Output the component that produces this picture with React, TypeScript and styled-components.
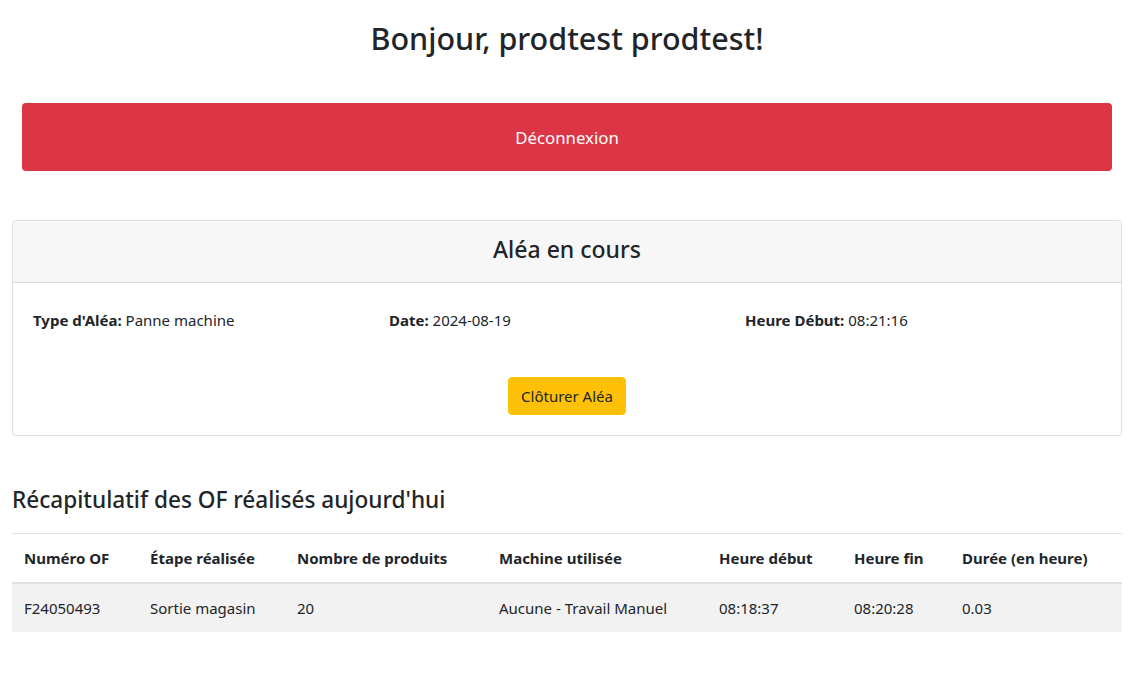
import React from "react";
import styled, { createGlobalStyle } from "styled-components";

const GlobalStyle = createGlobalStyle`
  html, body {
    margin: 0;
    padding: 0;
    background: #fff;
  }
  body {
    font-family: "Noto Sans", "Open Sans", Arial, sans-serif;
    font-size: 16px;
    line-height: 1.5;
    color: #212529;
  }
`

const Page = styled.div`
  display: flex;
  flex-direction: column;
  padding: 0 19px 0 12px;
`

const Title = styled.h2`
  margin: 19px 0 0 0;
  font-size: 30.5px;
  font-weight: 500;
  line-height: 38px;
  text-align: center;
`

const LogoutWrap = styled.div`
  padding: 46px 10px 0 10px;
`

const DangerButton = styled.button`
  width: 100%;
  height: 68px;
  border: none;
  border-radius: 4px;
  background-color: #dc3545;
  color: #fff;
  font-family: inherit;
  font-size: 16.8px;
`

const Card = styled.section`
  margin-top: 49px;
  border: 1px solid rgba(0, 0, 0, 0.125);
  border-radius: 4px;
`

const CardHeader = styled.div`
  height: 62px;
  padding-bottom: 4px;
  box-sizing: border-box;
  display: flex;
  align-items: center;
  justify-content: center;
  background-color: #f7f7f7;
  border-bottom: 1px solid rgba(0, 0, 0, 0.125);
  border-radius: 4px 4px 0 0;
`

const CardTitle = styled.h3`
  margin: 0;
  font-size: 23px;
  font-weight: 500;
  line-height: 1.2;
`

const CardBody = styled.div`
  padding: 25px 20px 20px 20px;
  display: flex;
  flex-direction: column;
  align-items: center;
  gap: 45px;
`

const InfoRow = styled.div`
  width: 100%;
  display: grid;
  grid-template-columns: repeat(3, 1fr);
  font-size: 15px;
  line-height: 24px;
`

const Label = styled.strong`
  font-weight: 700;
`

const WarningButton = styled.button`
  height: 38px;
  padding: 0 12px;
  border: 1px solid #ffc107;
  border-radius: 4px;
  background-color: #ffc107;
  color: #212529;
  font-family: inherit;
  font-size: 15px;
`

const SectionTitle = styled.h4`
  margin: 50px 0 20px 0;
  font-size: 22.6px;
  font-weight: 500;
  line-height: 1.2;
`

const Table = styled.table`
  width: 100%;
  table-layout: fixed;
  border-collapse: collapse;
  font-size: 15px;
  margin-bottom: 40px;
`

const Th = styled.th<{ $w?: number }>`
  box-sizing: border-box;
  width: ${p => (p.$w ? `${p.$w}px` : "auto")};
  padding: 12px;
  text-align: left;
  font-weight: 700;
  line-height: 24px;
  white-space: nowrap;
  border-top: 1px solid #dee2e6;
  border-bottom: 2px solid #dee2e6;
`

const Tr = styled.tr<{ $striped?: boolean }>`
  background-color: ${p => (p.$striped ? "#f2f2f2" : "transparent")};
`

const Td = styled.td`
  padding: 12px;
  line-height: 24px;
  white-space: nowrap;
`

const columns = [
  { label: "Numéro OF", w: 126 },
  { label: "Étape réalisée", w: 147 },
  { label: "Nombre de produits", w: 202 },
  { label: "Machine utilisée", w: 220 },
  { label: "Heure début", w: 135 },
  { label: "Heure fin", w: 108 },
  { label: "Durée (en heure)" },
]

const rows = [
  ["F24050493", "Sortie magasin", "20", "Aucune - Travail Manuel", "08:18:37", "08:20:28", "0.03"],
]

const App = () => {
  return (
    <>
      <GlobalStyle />
      <Page>
        <Title>Bonjour, prodtest prodtest!</Title>
        <LogoutWrap>
          <DangerButton>Déconnexion</DangerButton>
        </LogoutWrap>

        <Card>
          <CardHeader>
            <CardTitle>Aléa en cours</CardTitle>
          </CardHeader>
          <CardBody>
            <InfoRow>
              <div><Label>Type d'Aléa:</Label> Panne machine</div>
              <div><Label>Date:</Label> 2024-08-19</div>
              <div><Label>Heure Début:</Label> 08:21:16</div>
            </InfoRow>
            <WarningButton>Clôturer Aléa</WarningButton>
          </CardBody>
        </Card>

        <SectionTitle>Récapitulatif des OF réalisés aujourd'hui</SectionTitle>
        <Table>
          <thead>
            <tr>
              {columns.map(c => (
                <Th key={c.label} $w={c.w}>{c.label}</Th>
              ))}
            </tr>
          </thead>
          <tbody>
            {rows.map((r, i) => (
              <Tr key={i} $striped={i % 2 === 0}>
                {r.map((cell, j) => <Td key={j}>{cell}</Td>)}
              </Tr>
            ))}
          </tbody>
        </Table>
      </Page>
    </>
  )
}

export default App
